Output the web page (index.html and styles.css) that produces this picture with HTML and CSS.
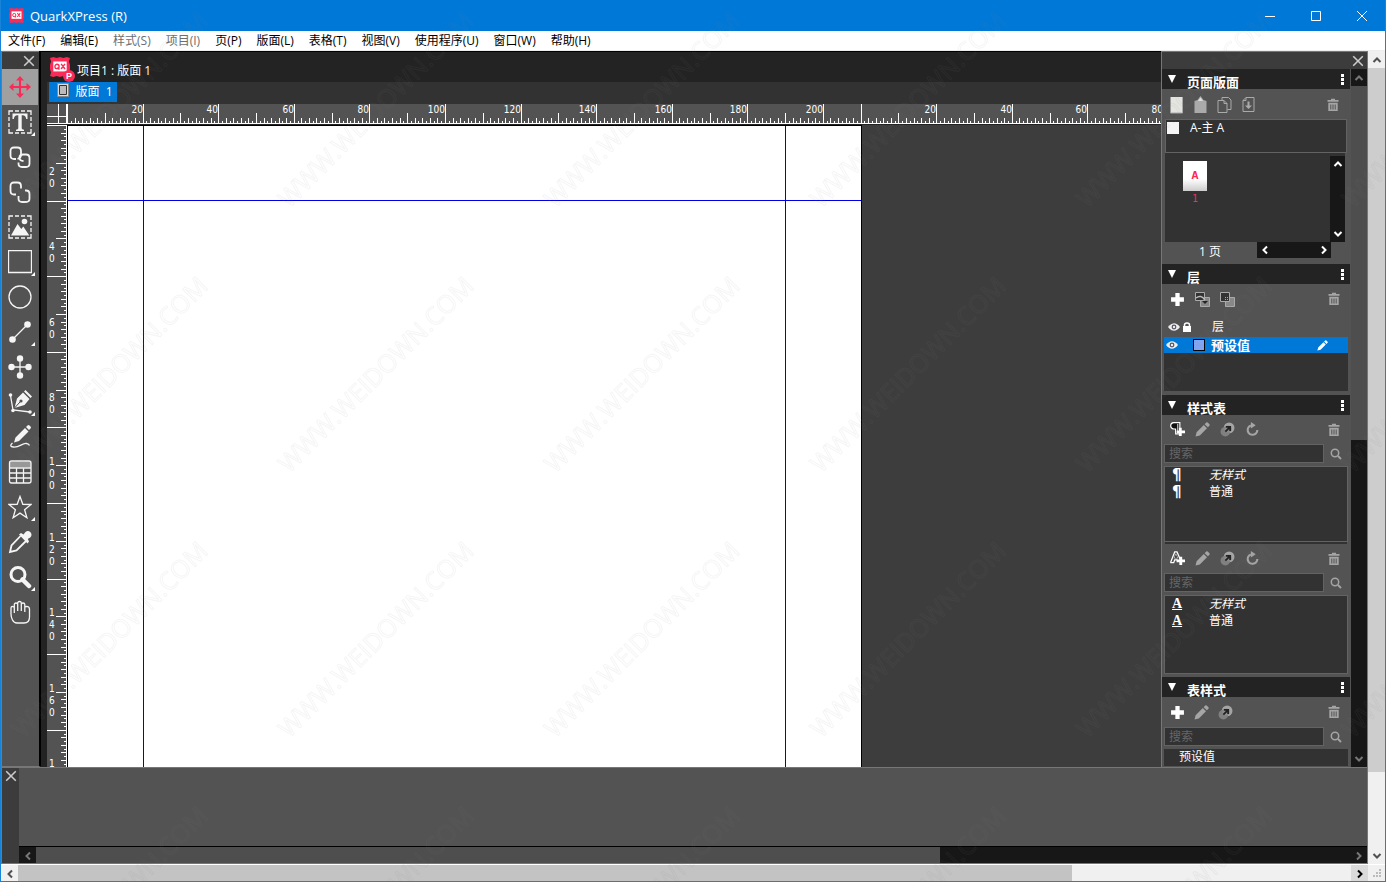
FILE: index.html
```html
<!DOCTYPE html>
<html lang="zh-CN">

<head>
    <meta charset="utf-8">
    <title>QuarkXPress (R)</title>
    <link rel="stylesheet" href="styles.css">
</head>

<body>
    <svg class="symbols" aria-hidden="true">
        <symbol id="i-close" viewBox="0 0 10 10"><path d="M1 1l8 8M9 1L1 9" fill="none" stroke="currentColor" stroke-width="1.3"/></symbol>
        <symbol id="i-up" viewBox="0 0 10 10"><path d="M1.5 7L5 3.5 8.5 7" fill="none" stroke="currentColor" stroke-width="2"/></symbol>
        <symbol id="i-down" viewBox="0 0 10 10"><path d="M1.5 3L5 6.5 8.5 3" fill="none" stroke="currentColor" stroke-width="2"/></symbol>
        <symbol id="i-left" viewBox="0 0 10 10"><path d="M7 1.5L3.5 5 7 8.5" fill="none" stroke="currentColor" stroke-width="2"/></symbol>
        <symbol id="i-right" viewBox="0 0 10 10"><path d="M3 1.5L6.5 5 3 8.5" fill="none" stroke="currentColor" stroke-width="2"/></symbol>
        <symbol id="i-trash" viewBox="0 0 12 14"><path d="M.5 2H4V.8h4V2h3.500v1.700H.5z M1.300 4.800h9.400V13H1.300z M3.300 6.500v5h1v-5z M5.500 6.500v5h1v-5z M7.700 6.500v5h1v-5z" fill="currentColor" fill-rule="evenodd"/></symbol>
        <symbol id="i-plus" viewBox="0 0 14 14"><path d="M5 1h4v4h4v4H9v4H5V9H1V5h4z" fill="currentColor"/></symbol>
        <symbol id="i-pencil" viewBox="0 0 14 14"><path d="M.5 13.5l1-4 6.700-6.700 3 3-6.700 6.700zM9 2L10.500.5q.7-.5 1.300 0l1.700 1.700q.5.600 0 1.300L12 5z" fill="currentColor"/></symbol>
        <symbol id="i-copy" viewBox="0 0 14 14"><circle cx="8.500" cy="5.500" r="5" fill="currentColor"/><circle cx="5" cy="9" r="4.500" fill="#808080"/><circle cx="7.500" cy="6.500" r="3.300" fill="#8c8c8c"/><path d="M5 9l4-4M5.500 4.500h4v4" fill="none" stroke="#222" stroke-width="1.700"/></symbol>
        <symbol id="i-update" viewBox="0 0 14 14"><path d="M5.500 3.200A4.500 4.500 0 1 0 11.500 7.500" fill="none" stroke="currentColor" stroke-width="2"/><path d="M5.500 0v6L10 3z" fill="currentColor"/></symbol>
        <symbol id="i-search" viewBox="0 0 12 12"><circle cx="5" cy="5" r="3.700" fill="none" stroke="currentColor" stroke-width="1.500"/><path d="M8 8l3 3" stroke="currentColor" stroke-width="1.800"/></symbol>
        <symbol id="i-eye" viewBox="0 0 12 8"><path d="M0 4q6-7.500 12 0-6 7.500-12 0z" fill="#eee"/><circle cx="6" cy="4" r="2.400" fill="#556"/><circle cx="6" cy="4" r="1.200" fill="#eee"/></symbol>
        <symbol id="i-qx" viewBox="0 0 18 18"><path d="M0 1l3-1 3 1 3-1 3 1 3-1 3 1-1 3 1 3v4l-1 3 1 3-3 1-3-1-3 1-3-1-3 1-3-1 1-3-1-3V7l1-3z" fill="#fb2a56"/><path d="M3 4h12v9H3z" fill="#fff"/><ellipse cx="6.300" cy="8.500" rx="1.900" ry="2" fill="none" stroke="#fb2a56" stroke-width="1.200"/><path d="M6.800 9.500l1.700 1.700M10 6.200l3.500 4.600M13.500 6.200L10 10.800" fill="none" stroke="#fb2a56" stroke-width="1.300"/></symbol>
    </svg>

    <header class="titlebar">
        <svg class="app-icon"><use href="#i-qx"/></svg>
        <span class="app-name">QuarkXPress (R)</span>
        <button class="win-btn" aria-label="最小化"><svg viewBox="0 0 10 10"><path d="M0 5.500h10"/></svg></button>
        <button class="win-btn" aria-label="最大化"><svg viewBox="0 0 10 10"><path d="M.5.500h9v9h-9z"/></svg></button>
        <button class="win-btn" aria-label="关闭"><svg viewBox="0 0 10 10"><path d="M0 0l10 10M10 0L0 10"/></svg></button>
    </header>

    <nav class="menubar">
        <button>文件(F)</button>
        <button>编辑(E)</button>
        <button class="off">样式(S)</button>
        <button class="off">项目(I)</button>
        <button>页(P)</button>
        <button>版面(L)</button>
        <button>表格(T)</button>
        <button>视图(V)</button>
        <button>使用程序(U)</button>
        <button>窗口(W)</button>
        <button>帮助(H)</button>
    </nav>

    <div class="client">
        <div class="desk">
            <div class="workspace">
                <aside class="tools">
                    <div class="palette-top"><button class="close" aria-label="关闭"><svg><use href="#i-close"/></svg></button></div>
                    <button class="tool active" aria-label="项目工具"><svg viewBox="0 0 24 24"><path d="M12 3v18M3 12h18" stroke="#fb2a56" stroke-width="2"/><path d="M12 1l4 4.500H8zM12 23l4-4.500H8zM1 12l4.500-4v8zM23 12l-4.500-4v8z" fill="#fb2a56"/></svg></button>
                    <button class="tool more" aria-label="文本内容工具"><svg viewBox="0 0 24 24"><path d="M1 5V1h4M7 1h4M13 1h4M19 1h4v4M23 7v4M23 13v4M23 19v4h-4M17 23h-4M11 23H7M5 23H1v-4M1 17v-4M1 11V7" class="ln"/><path d="M4.500 3.500h15V9h-1.300q-.4-3.500-3.500-3.800h-1v13q0 1.300 2.300 1.500V21H8v-1.300q2.300-.2 2.300-1.500v-13h-1Q6.200 5.500 5.800 9H4.500z" class="fl"/></svg></button>
                    <button class="tool" aria-label="文本链接工具"><svg viewBox="0 0 24 24"><g class="ln thick"><path d="M8 14H6q-3.500 0-3.500-3.500V6Q2.500 2.500 6 2.500h3.500Q13 2.500 13 6v4q0 3-3.500 4"/><path d="M15.500 16q-4 0-4-3.500 0-3 3.500-3h3q3.500 0 3.500 3.500v5.500q0 3.500-3.500 3.500h-4q-3.500 0-3.500-3.500V17.500"/></g></svg></button>
                    <button class="tool" aria-label="文本取消链接工具"><svg viewBox="0 0 24 24"><g class="ln thick"><path d="M8 14.500H6Q2.500 14.500 2.500 11V6Q2.500 2.500 6 2.500h3.500Q13 2.500 13 6v2.500"/><path d="M17 10.500h1q3.500 0 3.500 3.500v4.500q0 3.500-3.500 3.500h-4q-3.500 0-3.500-3.500V16"/></g></svg></button>
                    <button class="tool" aria-label="图片内容工具"><svg viewBox="0 0 24 24"><path d="M1 5V1h4M7 1h4M13 1h4M19 1h4v4M23 7v4M23 13v4M23 19v4h-4M17 23h-4M11 23H7M5 23H1v-4M1 17v-4M1 11V7" class="ln"/><path d="M3 20.500L9.500 9l3.800 5 2-2.500 6 9z" class="fl"/><circle cx="16.500" cy="6.500" r="2.800" class="fl"/></svg></button>
                    <button class="tool more" aria-label="矩形框工具"><svg viewBox="0 0 24 24"><path d="M.5.500h23v22H.5z" class="ln"/></svg></button>
                    <button class="tool" aria-label="椭圆框工具"><svg viewBox="0 0 24 24"><circle cx="12" cy="12" r="11" class="ln"/></svg></button>
                    <button class="tool more" aria-label="直线工具"><svg viewBox="0 0 24 24"><path d="M5 19L19 5" class="ln"/><circle cx="4.500" cy="19.500" r="3.300" class="fl"/><circle cx="19.500" cy="4.500" r="3.300" class="fl"/></svg></button>
                    <button class="tool" aria-label="贝塞尔工具"><svg viewBox="0 0 24 24"><path d="M12 4v16M4 12h16" class="ln"/><g class="fl"><circle cx="12" cy="3.500" r="3.200"/><circle cx="12" cy="20.500" r="3.200"/><circle cx="3.500" cy="12" r="3.200"/><circle cx="20.500" cy="12" r="3.200"/></g></svg></button>
                    <button class="tool more" aria-label="钢笔工具"><svg viewBox="0 0 24 24"><path d="M2.500 5.500L5 20l17 2" class="ln"/><g class="fl"><circle cx="2.500" cy="5" r="1.800"/><circle cx="5" cy="20.500" r="1.800"/><circle cx="22" cy="22" r="1.800"/><path d="M16 1.500L17.500 0 24 6.500 22.500 8zM6.500 18L9 8.500l6-6L21.500 9l-5 6z"/></g><path d="M6.500 18l6-6.500" stroke="#444"/><circle cx="13" cy="11" r="1.600" fill="#535353"/></svg></button>
                    <button class="tool" aria-label="手绘工具"><svg viewBox="0 0 24 24"><path d="M6 17.500l1.500-5L17 3l3.500 3.500L11 16zM18 2L19.500.5q1-.8 2 0l1 1q1 1 0 2L21 5z" class="fl"/><path d="M4.500 18q-4 3.500 1 4c6 .5 8.500-4 13-3.500q2.500.5 3 2" class="ln"/></svg></button>
                    <button class="tool" aria-label="表格工具"><svg viewBox="0 0 24 24"><path d="M2 1.500h21v6H2z" fill="#999"/><path d="M1.500 3q0-2 2-2H21q2 0 2 2v18q0 2-2 2H3.500q-2 0-2-2zM1.500 8H23M1.500 13H23M1.500 18H23M8.500 8v15M15.500 8v15" class="ln"/></svg></button>
                    <button class="tool more" aria-label="星形工具"><svg viewBox="0 0 24 24"><path d="M12 1.500l2.800 7.800 8.300.2-6.500 5.200 2.300 8-6.900-4.600-6.900 4.600 2.300-8L.9 9.500l8.300-.2z" class="ln"/></svg></button>
                    <button class="tool" aria-label="吸管工具"><svg viewBox="0 0 24 24"><path d="M12.500 6L3.500 15.500 2 22l6.500-1.500L18 11" class="ln thick"/><path d="M11 4.500L13 3l2.500 1.500L17.500 2q2.500-2 5 .3 2 2.500 0 5L19.800 9l1.200 2.500-1.500 2z" class="fl"/></svg></button>
                    <button class="tool more" aria-label="缩放工具"><svg viewBox="0 0 24 24"><circle cx="10" cy="9.500" r="7" fill="none" stroke="#f5f5f5" stroke-width="3"/><path d="M14.500 14.500l6.500 6.500" stroke="#f5f5f5" stroke-width="4.500" stroke-linecap="round"/></svg></button>
                    <button class="tool" aria-label="平移工具"><svg viewBox="0 0 24 24"><path d="M3 14V8q0-1.600 1.500-1.600Q6.300 6.500 6.300 8V4.500Q6.300 3 8 3t1.700 1.500V3Q9.700 1.500 11.500 1.500T13.300 3v1.500Q13.300 3 15 3t1.800 1.500V8q0-1.700 1.700-1.700Q21.500 6.500 21.500 9v8q0 6-5.500 6H9q-3 0-4.500-3Q3 17.500 3 14zM6.300 8v5M9.700 4v7M13.300 4v7M16.800 7v5" class="ln"/></svg></button>
                </aside>

                <main class="document">
                    <div class="doc-title">
                        <span class="doc-logo"><svg><use href="#i-qx"/></svg><i>P</i></span>
                        <span>项目1 : 版面 1</span>
                    </div>
                    <div class="tabs">
                        <button class="tab"><svg viewBox="0 0 12 14"><path d="M.5.500h11v13H.5z" fill="#ddd" stroke="#888"/><path d="M2.500 2.500h7v9h-7z" fill="#bbb" stroke="#333"/></svg>版面&nbsp; 1</button>
                    </div>
                    <div class="layout">
                        <div class="corner"></div>
                        <svg class="ruler ruler-h" id="ruler-h"></svg>
                        <svg class="ruler ruler-v" id="ruler-v"></svg>
                        <div class="pasteboard">
                            <div class="page">
                                <i class="guide v left"></i>
                                <i class="guide v right"></i>
                                <i class="guide h"></i>
                            </div>
                        </div>
                    </div>
                </main>

                <aside class="palettes">
                    <div class="palette-top"><button class="close" aria-label="关闭"><svg><use href="#i-close"/></svg></button></div>
                    <div class="palette-body">
                        <div class="palette-list">
                            <section class="pages">
                                <h2>页面版面<button class="dots" aria-label="菜单"></button></h2>
                                <div class="icons">
                                    <button aria-label="空白页"><svg viewBox="0 0 14 18"><path d="M1 1h12v16H1z" fill="#e4e4e0"/><path d="M1 17h12V1" fill="none" stroke="#aaa"/></svg></button>
                                    <button aria-label="空白对页"><svg viewBox="0 0 14 18"><path d="M1 5l3-1 3-4 3 4 3 1v12H1z" fill="#aaa"/><path d="M4.500 5L7 1.500 9.500 5z" fill="#ddd"/></svg></button>
                                    <button aria-label="复制"><svg viewBox="0 0 14 18"><path d="M.5 4.500h6l3 3v9h-9zM4.500 4.500V1.500H11l2.500 2.500v9.500H10M6.500 4.500v3h3" fill="none" stroke="#aaa"/></svg></button>
                                    <button aria-label="插入"><svg viewBox="0 0 14 18"><path d="M4.500 1.500h8v14h-11v-11zM4.500 1.500v3h-3" fill="none" stroke="#aaa"/><path d="M6 5.500h2v4h2.500L7 13 3.500 9.500H6z" fill="#aaa"/></svg></button>
                                    <button class="trash" aria-label="删除"><svg><use href="#i-trash"/></svg></button>
                                </div>
                                <div class="masters"><i></i>A-主 A</div>
                                <div class="page-view">
                                    <div class="thumb-page"><b>A</b><span>1</span></div>
                                    <div class="mini-scroll v"><button aria-label="上"><svg><use href="#i-up"/></svg></button><button aria-label="下"><svg><use href="#i-down"/></svg></button></div>
                                </div>
                                <div class="page-count">
                                    <span>1 页</span>
                                    <div class="mini-scroll h"><button aria-label="左"><svg><use href="#i-left"/></svg></button><button aria-label="右"><svg><use href="#i-right"/></svg></button></div>
                                </div>
                            </section>

                            <section class="layers">
                                <h2>层<button class="dots" aria-label="菜单"></button></h2>
                                <div class="icons">
                                    <button class="on" aria-label="新建"><svg><use href="#i-plus"/></svg></button>
                                    <button aria-label="移到层"><svg viewBox="0 0 15 15"><path d="M5.500 5.500h9v9h-9z" fill="#888" stroke="#aaa"/><path d="M.5.500h9v8h-9z" fill="#333" stroke="#aaa"/><path d="M1 6q5-4 9 2" fill="none" stroke="#bbb" stroke-width="1.500"/><path d="M7 9h6l-3 3z" fill="#222"/></svg></button>
                                    <button aria-label="合并层"><svg viewBox="0 0 15 15"><path d="M5.500 5.500h9v9h-9z" fill="#888" stroke="#aaa"/><path d="M.5.500h9v9h-9z" fill="#333" stroke="#aaa"/><path d="M5 5.500h1M7 5.500h1M5 7.500h1M7 7.500h1" stroke="#aaa"/></svg></button>
                                    <button class="trash" aria-label="删除"><svg><use href="#i-trash"/></svg></button>
                                </div>
                                <div class="layer head"><svg class="eye"><use href="#i-eye"/></svg><svg class="lock" viewBox="0 0 8 10"><path d="M0 4h8v6H0z" fill="#fff"/><path d="M1.500 5V3q0-2 2.500-2t2.500 2v2" fill="none" stroke="#fff" stroke-width="1.500"/></svg><span>层</span></div>
                                <div class="layer current"><svg class="eye"><use href="#i-eye"/></svg><i></i><b>预设值</b><svg class="pen"><use href="#i-pencil"/></svg></div>
                                <div class="layer-space"></div>
                            </section>

                            <section class="styles">
                                <h2>样式表<button class="dots" aria-label="菜单"></button></h2>
                                <div class="icons">
                                    <button class="on" aria-label="新建段落样式"><svg viewBox="0 0 16 16"><path d="M4 .7h6.500v12H6V7.500H4Q.7 7 .7 4T4 .7z" fill="#111" stroke="#fff" stroke-width="1.200"/><path d="M8.300 2v10" stroke="#fff"/><path d="M9.500 6h3v3H16v3h-3.500v3h-3v-3H7V9h2.500z" fill="#fff"/></svg></button>
                                    <button aria-label="编辑"><svg><use href="#i-pencil"/></svg></button>
                                    <button aria-label="复制"><svg><use href="#i-copy"/></svg></button>
                                    <button aria-label="更新"><svg><use href="#i-update"/></svg></button>
                                    <button class="trash" aria-label="删除"><svg><use href="#i-trash"/></svg></button>
                                </div>
                                <div class="search"><input type="text" placeholder="搜索" aria-label="搜索段落样式"><svg><use href="#i-search"/></svg></div>
                                <ul class="para">
                                    <li><b>¶</b><em>无样式</em></li>
                                    <li><b>¶</b>普通</li>
                                </ul>
                                <div class="icons">
                                    <button class="on" aria-label="新建字符样式"><svg viewBox="0 0 16 16"><path d="M.5 12.500H4l1-3h3M.5 12.500L5 1h2.500L11 9" fill="none" stroke="#fff" stroke-width="1.300"/><path d="M6.300 3L4.500 7.500h3.700z" fill="#111" stroke="#fff" stroke-width=".6"/><path d="M10 6h3v3h3v3h-3v3h-3v-3H7V9h3z" fill="#fff"/></svg></button>
                                    <button aria-label="编辑"><svg><use href="#i-pencil"/></svg></button>
                                    <button aria-label="复制"><svg><use href="#i-copy"/></svg></button>
                                    <button aria-label="更新"><svg><use href="#i-update"/></svg></button>
                                    <button class="trash" aria-label="删除"><svg><use href="#i-trash"/></svg></button>
                                </div>
                                <div class="search"><input type="text" placeholder="搜索" aria-label="搜索字符样式"><svg><use href="#i-search"/></svg></div>
                                <ul class="char">
                                    <li><b>A</b><em>无样式</em></li>
                                    <li><b>A</b>普通</li>
                                </ul>
                            </section>

                            <section class="table-styles">
                                <h2>表样式<button class="dots" aria-label="菜单"></button></h2>
                                <div class="icons">
                                    <button class="on" aria-label="新建"><svg><use href="#i-plus"/></svg></button>
                                    <button aria-label="编辑"><svg><use href="#i-pencil"/></svg></button>
                                    <button aria-label="复制"><svg><use href="#i-copy"/></svg></button>
                                    <button class="trash" aria-label="删除"><svg><use href="#i-trash"/></svg></button>
                                </div>
                                <div class="search"><input type="text" placeholder="搜索" aria-label="搜索表样式"><svg><use href="#i-search"/></svg></div>
                                <div class="table-style">预设值</div>
                            </section>
                        </div>
                        <div class="scroll dark v">
                            <button aria-label="上"><svg><use href="#i-up"/></svg></button>
                            <div class="track"><div class="thumb" style="height: 53.3%"></div></div>
                            <button aria-label="下"><svg><use href="#i-down"/></svg></button>
                        </div>
                    </div>
                </aside>
            </div>

            <div class="measurements">
                <div class="strip"><button class="close" aria-label="关闭"><svg><use href="#i-close"/></svg></button></div>
                <div class="measure-body">
                    <div class="scroll dark h">
                        <button aria-label="左"><svg><use href="#i-left"/></svg></button>
                        <div class="track"><div class="thumb" style="width: 68.8%"></div></div>
                        <button aria-label="右"><svg><use href="#i-right"/></svg></button>
                    </div>
                </div>
            </div>
        </div>
        <div class="scroll light v">
            <button aria-label="上"><svg><use href="#i-up"/></svg></button>
            <div class="track"><div class="thumb" style="height: 90.4%"></div></div>
            <button aria-label="下"><svg><use href="#i-down"/></svg></button>
        </div>
    </div>

    <footer class="bottom-scroll">
        <div class="scroll light h">
            <button aria-label="左"><svg><use href="#i-left"/></svg></button>
            <div class="track"><div class="thumb" style="width: 79.1%"></div></div>
            <button class="pressed" aria-label="右"><svg><use href="#i-right"/></svg></button>
        </div>
        <svg class="grip" viewBox="0 0 17 17"><path d="M11 4h2v2h-2zM8 7h2v2H8zM11 7h2v2h-2zM5 10h2v2H5zM8 10h2v2H8zM11 10h2v2h-2z" fill="#bbb"/></svg>
    </footer>

    <svg class="watermark" aria-hidden="true">
        <defs>
            <pattern id="mark" width="266" height="265" patternUnits="userSpaceOnUse">
                <text transform="translate(23 209) rotate(-45)">WWW.WEIDOWN.COM</text>
            </pattern>
        </defs>
        <rect width="100%" height="100%" fill="url(#mark)"/>
    </svg>

    <script>
        // 1 mm at 96 dpi
        const MM = 96 / 25.4;
        const PAGE_MM = 210;

        function add(svg, name, attrs, text) {
            const el = document.createElementNS('http://www.w3.org/2000/svg', name);
            for (const key in attrs) el.setAttribute(key, attrs[key]);
            if (text) el.textContent = text;
            svg.appendChild(el);
        }

        function tickSize(n) {
            if (n % 20 === 0) return 20;
            if (n % 10 === 0) return 11;
            return n % 2 === 0 ? 6 : 3;
        }

        function drawRulers() {
            const h = document.getElementById('ruler-h');
            const v = document.getElementById('ruler-v');
            h.textContent = '';
            v.textContent = '';

            for (let n = 0; n * MM < h.clientWidth + 20; n++) {
                const mm = n % PAGE_MM;
                const x = Math.round(n * MM);
                const size = tickSize(mm);
                add(h, 'rect', { x: x, y: 20 - size, width: 1, height: size });
                if (mm && mm % 20 === 0) add(h, 'text', { x: x, y: 9, 'text-anchor': 'end' }, String(mm));
            }

            for (let n = 0; n * MM < v.clientHeight + 10; n++) {
                const y = Math.round(n * MM);
                const size = tickSize(n);
                add(v, 'rect', { x: 20 - size, y: y, width: size, height: 1 });
            }

            // labels run down the ruler, one digit per line
            for (let n = 20; (n - 20) * MM < v.clientHeight; n += 20) {
                const digits = String(n).split('');
                digits.forEach((d, i) => {
                    const y = Math.round(n * MM) - 14 - (digits.length - 1 - i) * 12;
                    if (y < v.clientHeight + 4) add(v, 'text', { x: 2, y: y }, d);
                });
            }
        }

        drawRulers();
        window.addEventListener('resize', drawRulers);
    </script>
</body>

</html>
```

FILE: styles.css
```css
* {
    box-sizing: border-box;
}

body {
    margin: 0;
    min-height: 100vh;
    display: flex;
    flex-direction: column;
    border: 1px solid #1883d7;
    border-top: 0;
    background: #535353;
    color: #fff;
    font: 12px/16px "Open Sans", "Noto Sans CJK SC", sans-serif;
}

button {
    margin: 0;
    padding: 0;
    border: 0;
    background: none;
    color: inherit;
    font: inherit;
    display: flex;
    align-items: center;
    justify-content: center;
}

svg {
    display: block;
    flex: none;
}

.symbols {
    position: absolute;
    width: 0;
    height: 0;
}

/* title bar and menus */
.titlebar {
    display: flex;
    align-items: center;
    height: 31px;
    margin: 0 -1px;
    padding: 0 1px 0 9px;
    background: #0078d7;
}

.app-icon {
    width: 15px;
    height: 15px;
    margin-right: 6px;
}

.app-name {
    flex: 1;
    font-size: 13px;
}

.win-btn {
    width: 46px;
    height: 30px;
}

.win-btn svg {
    width: 10px;
    height: 10px;
    fill: none;
    stroke: #fff;
}

.menubar {
    display: flex;
    height: 20px;
    background: #fff;
    color: #000;
    border-bottom: 1px solid #ededed;
}

.menubar button {
    padding: 0 8px 0 7px;
}

.menubar .off {
    color: #6d6d6d;
}

/* client area */
.client {
    flex: 1;
    display: flex;
    min-height: 0;
}

.desk {
    flex: 1;
    min-width: 0;
    display: flex;
    flex-direction: column;
    border-left: 1px solid #777;
    border-right: 1px solid #777;
}

.workspace {
    flex: 1;
    display: flex;
    min-height: 0;
}

.palette-top {
    height: 18px;
    display: flex;
    justify-content: flex-end;
    align-items: center;
    padding-right: 4px;
    background: #3c3c3c;
    border-top: 1px solid #777;
    flex: none;
}

.close svg {
    width: 12px;
    height: 12px;
    color: #ccc;
}

/* tools */
.tools {
    width: 39px;
    background: #535353;
    border-right: 2px solid #000;
    border-bottom: 1px solid #777;
}

.tool {
    position: relative;
    width: 35px;
    height: 35px;
}

.tool.active {
    width: 36px;
    height: 36px;
    margin-bottom: -1px;
    background: #a0a0a0;
}

.tool svg {
    width: 24px;
    height: 24px;
}

.tool.more::after {
    content: "";
    position: absolute;
    right: 2px;
    bottom: 3px;
    border: 2px solid transparent;
    border-right-color: #fff;
    border-bottom-color: #fff;
}

.ln {
    fill: none;
    stroke: #f5f5f5;
    stroke-width: 1.3;
}

.ln.thick {
    stroke-width: 1.8;
}

.fl {
    fill: #f5f5f5;
}

/* document window */
.document {
    flex: 1;
    min-width: 0;
    display: flex;
    flex-direction: column;
    padding-left: 6px;
    background: #232323;
    border-top: 1px solid #000;
}

.doc-title {
    display: flex;
    align-items: center;
    height: 30px;
    padding: 7px 0 0 3px;
    gap: 2px;
}

.doc-logo {
    position: relative;
    width: 25px;
    height: 27px;
}

.doc-logo svg {
    width: 20px;
    height: 20px;
}

.doc-logo i {
    position: absolute;
    right: 0;
    bottom: 2px;
    width: 12px;
    height: 12px;
    border-radius: 6px;
    background: #fb2a56;
    font: bold 9px/12px "Liberation Sans", sans-serif;
    text-align: center;
}

.tabs {
    height: 22px;
    padding-left: 2px;
    background: #323232;
}

.tab {
    width: 68px;
    height: 20px;
    padding-left: 4px;
    gap: 6px;
    background: #0078d7;
}

.tab svg {
    width: 12px;
    height: 14px;
    margin-bottom: 4px;
}

.layout {
    flex: 1;
    min-height: 0;
    display: grid;
    grid-template-columns: 20px 1fr;
    grid-template-rows: 20px 1fr;
    row-gap: 1px;
}

.corner {
    background: linear-gradient(#fff, #fff) 11px 0 / 1px 20px no-repeat,
        linear-gradient(#fff, #fff) 0 12px / 20px 1px no-repeat,
        #535353;
    border-right: 1px solid #fff;
    border-bottom: 1px solid #fff;
}

.ruler {
    width: 100%;
    height: 100%;
    min-width: 0;
    min-height: 0;
    overflow: hidden;
    contain: size;
    background: #535353;
    fill: #fff;
    font: 10px/12px "DejaVu Sans Condensed", "DejaVu Sans", sans-serif;
}

.ruler-h {
    border-bottom: 1px solid #fff;
}

.ruler-v {
    border-right: 1px solid #fff;
}

.pasteboard {
    overflow: hidden;
    background: #3d3d3d;
}

.page {
    position: relative;
    width: 795px;
    height: 297mm;
    margin-bottom: -297mm;
    background: #fff;
    border: 1px solid #000;
}

.guide {
    position: absolute;
    background: #0000e6;
}

.guide.v {
    top: 0;
    bottom: 0;
    width: 1px;
}

.guide.left {
    left: 75px;
}

.guide.right {
    right: 75px;
}

.guide.h {
    top: 74px;
    left: 0;
    right: 0;
    height: 1px;
}

/* palettes */
.palettes {
    width: 206px;
    display: flex;
    flex-direction: column;
    border-left: 1px solid #777;
    background: #535353;
}

.palettes .palette-top {
    padding-right: 3px;
}

.palette-body {
    flex: 1;
    min-height: 0;
    display: flex;
}

.palette-list {
    flex: 1;
    min-width: 0;
    margin-right: 1px;
}

.palettes h2 {
    display: flex;
    align-items: center;
    height: 20px;
    margin: 0;
    padding: 5px 5px 0 6px;
    background: #232323;
    font-size: 13px;
    line-height: 16px;
}

.palettes h2::before {
    content: "";
    border: 4px solid transparent;
    border-top: 8px solid #fff;
    border-bottom: 0;
    margin: 0 11px 6px 0;
}

.dots {
    width: 3px;
    height: 11px;
    margin: 0 1px 4px auto;
    background: linear-gradient(#fff 3px, transparent 3px) 0 0 / 3px 4px;
}

.icons {
    display: flex;
    align-items: center;
    height: 30px;
    padding: 0 9px 0 8px;
    gap: 10px;
    color: #a5a5a5;
}

.icons button,
.icons svg {
    width: 15px;
    height: 15px;
}

.icons .on {
    color: #fff;
}

.icons .trash {
    margin-left: auto;
}

.icons .trash svg {
    width: 12px;
    height: 14px;
}

.pages .icons {
    padding: 2px 10px 0 7px;
    gap: 9px;
}

.pages .icons svg {
    height: 18px;
}

.pages .icons .trash svg {
    height: 14px;
}

.masters {
    display: flex;
    height: 34px;
    margin: 0 3px;
    padding-left: 1px;
    gap: 11px;
    background: #323232;
    border: 1px solid #636363;
}

.masters i {
    width: 12px;
    height: 12px;
    margin-top: 2px;
    background: #f5f5f5;
}

.page-view {
    display: flex;
    justify-content: space-between;
    height: 89px;
    margin: 0 5px 0 3px;
    padding-top: 3px;
    background: #323232;
}

.thumb-page {
    margin: 5px 0 0 18px;
    width: 24px;
    color: #fb2a56;
    text-align: center;
    font: 10px/14px "DejaVu Sans Condensed", "DejaVu Sans", sans-serif;
}

.thumb-page b {
    display: block;
    height: 30px;
    line-height: 30px;
    background: linear-gradient(#fff 60%, #ccc);
}

.thumb-page span {
    display: block;
    line-height: 16px;
}

.mini-scroll {
    display: flex;
    justify-content: space-between;
    background: #171717;
}

.mini-scroll button {
    width: 15px;
    height: 16px;
}

.mini-scroll svg {
    width: 10px;
    height: 10px;
}

.mini-scroll.v {
    flex-direction: column;
}

.mini-scroll.h {
    width: 74px;
    height: 16px;
}

.page-count {
    display: flex;
    justify-content: space-between;
    height: 22px;
    padding: 0 19px 0 37px;
    line-height: 20px;
}

.layers .icons {
    height: 32px;
    padding-bottom: 2px;
}

.layers {
    padding-bottom: 4px;
}

.layer {
    display: flex;
    align-items: center;
    height: 21px;
    margin: 0 2px;
    padding-left: 4px;
}

.eye {
    width: 12px;
    height: 8px;
}

.layer.head .lock {
    width: 8px;
    height: 10px;
    margin: 0 21px 0 3px;
}

.layer.current {
    height: 16px;
    padding-left: 2px;
    background: #0078d7;
}

.layer.current i {
    width: 12px;
    height: 12px;
    margin: 0 6px 0 15px;
    background: #82a5f5;
    border: 1px solid #000;
}

.layer.current b {
    flex: 1;
    font-size: 13px;
}

.layer .pen {
    width: 11px;
    height: 11px;
    margin-right: 20px;
}

.layer-space {
    height: 38px;
    margin: 0 2px;
    background: #323232;
}

.search {
    display: flex;
    align-items: center;
    gap: 6px;
    height: 19px;
    margin: 0 2px 3px;
}

.search input {
    width: 160px;
    height: 19px;
    padding: 0 4px;
    background: #323232;
    border: 1px solid #636363;
    color: #fff;
    font: inherit;
}

.search input::placeholder {
    color: #666;
}

.search svg {
    width: 12px;
    height: 12px;
    color: #a5a5a5;
}

.styles .icons {
    height: 29px;
}

.styles ul {
    height: 76px;
    margin: 0 2px;
    padding: 0;
    list-style: none;
    background: #323232;
    border: 1px solid #636363;
}

.styles .para {
    margin-bottom: 2px;
    box-shadow: 0 3px 0 -1px #323232;
}

.styles .char {
    height: 79px;
    margin-bottom: 3px;
}

.styles li {
    display: flex;
    height: 17px;
    line-height: 15px;
}

.styles li b {
    width: 37px;
    margin-left: 7px;
    font: bold 15px/17px "DejaVu Sans", sans-serif;
}

.styles .char b {
    font: bold 14px/16px "Liberation Serif", serif;
    text-decoration: underline;
}

.table-styles .icons {
    gap: 9px;
}

.table-style {
    height: 17px;
    margin: 0 2px;
    padding-left: 15px;
    background: #323232;
}

/* scroll bars */
.scroll {
    display: flex;
    flex: none;
}

.scroll.v {
    flex-direction: column;
    width: 17px;
}

.scroll.h {
    height: 17px;
}

.scroll button {
    width: 17px;
    height: 17px;
    flex: none;
}

.scroll button svg {
    width: 10px;
    height: 10px;
}

.scroll .track {
    flex: 1;
    min-height: 0;
}

.scroll.h .thumb {
    height: 100%;
}

.dark {
    background: #171717;
    color: #777;
}

.dark .thumb {
    background: #4e4e4e;
}

.dark.v {
    width: 16px;
}

.dark.v button {
    width: 16px;
}

.light {
    background: #f0f0f0;
    color: #505050;
}

.light .thumb {
    background: #cdcdcd;
}

.light .pressed {
    background: #dadada;
    color: #000;
}

/* measurements palette */
.measurements {
    display: flex;
    height: 97px;
    border-top: 1px solid #777;
    border-bottom: 1px solid #777;
}

.strip {
    width: 17px;
    padding: 2px 3px;
    background: #3c3c3c;
}

.measure-body {
    flex: 1;
    display: flex;
    flex-direction: column;
    justify-content: flex-end;
    background: #535353;
}

.measure-body .scroll {
    border-top: 1px solid #000;
}

.bottom-scroll {
    display: flex;
    height: 18px;
    border-top: 1px solid #fff;
    border-bottom: 1px solid #1883d7;
    margin-bottom: -1px;
    background: #f0f0f0;
}

.bottom-scroll .scroll {
    flex: 1;
}

.bottom-scroll .thumb {
    background: #c3c3c3;
}

.grip {
    width: 17px;
    height: 17px;
}

.watermark {
    position: fixed;
    inset: 0;
    width: 100%;
    height: 100%;
    pointer-events: none;
}

.watermark text {
    fill: none;
    stroke: #808080;
    stroke-opacity: 0.08;
    stroke-width: 1px;
    font: 25px "Open Sans", sans-serif;
}
```
